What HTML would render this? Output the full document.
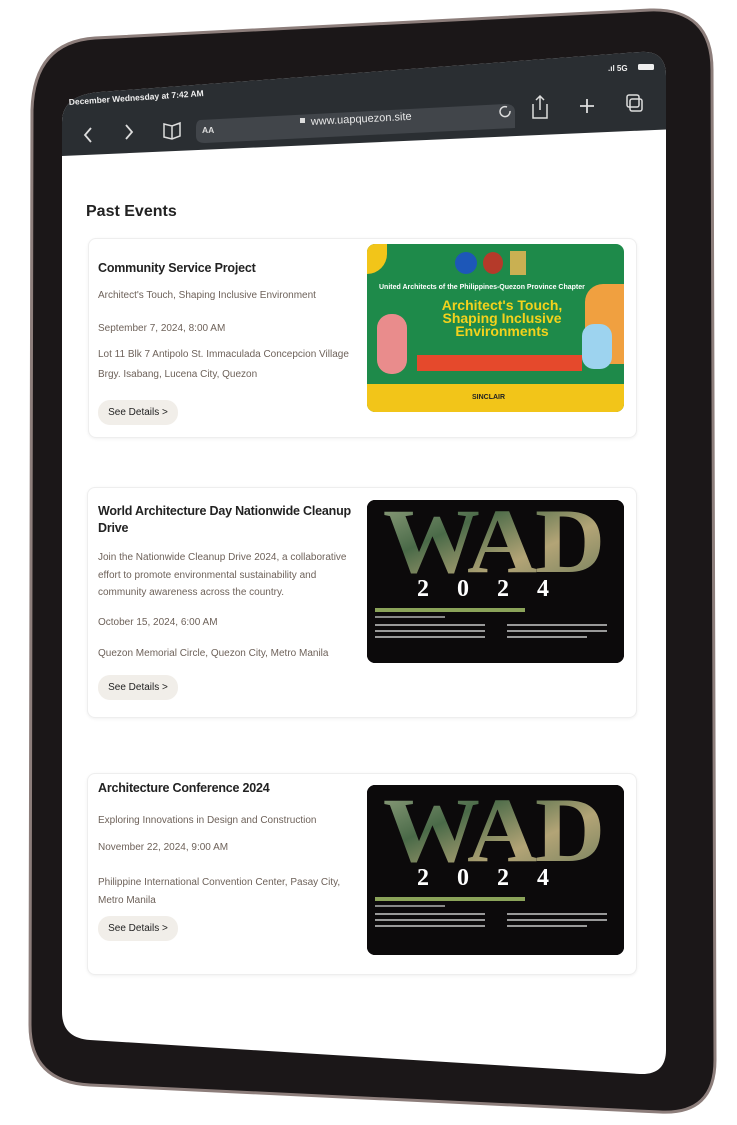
<!DOCTYPE html>
<html><head><meta charset="utf-8"><style>
*{margin:0;padding:0;box-sizing:border-box}
body{width:737px;height:1125px;background:#fff;position:relative;overflow:hidden;font-family:"Liberation Sans",sans-serif}
.a{position:absolute;white-space:nowrap}
.t{font-size:12.5px;font-weight:bold;color:#222;letter-spacing:-0.2px}
.s{font-size:10px;color:#6e625a}
.card{position:absolute;border:1px solid #eee;border-radius:8px;background:#fff;box-shadow:0 1px 3px rgba(0,0,0,.06)}
.btn{position:absolute;background:#f1eee9;border-radius:12px;font-size:10px;color:#222;text-align:center;line-height:25px;width:80px;height:25px}
.wad{position:absolute;background:#0c0a0b;border-radius:8px;overflow:hidden}
</style></head><body>
<svg class="a" style="left:0;top:0" width="737" height="1125">
<defs>
<clipPath id="scr"><path d="M100 92 L640 52 Q666 50 666 76 L666 1050 Q666 1075 640 1074 L90 1040 Q62 1038 62 1012 L62 122 Q62 95 100 92 Z"/></clipPath>
<linearGradient id="wg" x1="0" y1="0" x2="1" y2="1"><stop offset="0" stop-color="#9aa886"/><stop offset=".35" stop-color="#4a6a48"/><stop offset=".65" stop-color="#b3a476"/><stop offset="1" stop-color="#6b7b5a"/></linearGradient>
</defs>
<path d="M95 38 L650 10 Q712 8 712 70 L715 1060 Q715 1115 660 1112 L90 1085 Q30 1082 30 1025 L32 110 Q34 42 95 38 Z" fill="#1b1718" stroke="#8d7e7b" stroke-width="3"/>
<path d="M100 92 L640 52 Q666 50 666 76 L666 1050 Q666 1075 640 1074 L90 1040 Q62 1038 62 1012 L62 122 Q62 95 100 92 Z" fill="#fff"/>
<g clip-path="url(#scr)">
<path d="M40 40 L700 40 L700 128 L40 157 Z" fill="#2a2e32"/>
<path d="M200 120 L505 104 Q515 104 515 112 L515 128 L205 143 Q196 143 196 136 L196 128 Q196 121 200 120 Z" fill="#41454a"/>
</g>
<text x="69" y="105" font-size="8.5" font-weight="bold" fill="#eee" transform="rotate(-3.8 69 105)">December Wednesday at 7:42 AM</text>
<text x="608" y="71" font-size="8" font-weight="bold" fill="#eee">.ıl 5G</text>
<rect x="638" y="64" width="16" height="6" rx="1.5" fill="#eee"/>
<path d="M91 128 L85 135 L91 142" stroke="#ddd" stroke-width="1.8" fill="none"/>
<path d="M126 125 L132 132 L126 139" stroke="#ddd" stroke-width="1.8" fill="none"/>
<path d="M164 124 L172 126 L180 123 L180 136 L172 139 L164 137 Z M172 126 L172 139" stroke="#ddd" stroke-width="1.5" fill="none"/>
<text x="202" y="133" font-size="8.5" font-weight="bold" fill="#ddd">AA</text>
<rect x="300" y="118" width="5" height="5" fill="#ddd"/>
<text x="311" y="125" font-size="11" fill="#e8e8e8" transform="rotate(-3 311 125)">www.uapquezon.site</text>
<path d="M507 107 A5 5 0 1 0 510 111" stroke="#ddd" stroke-width="1.5" fill="none"/>
<path d="M533 104 L533 118 L547 118 L547 104 M540 96 L540 110 M536 100 L540 96 L544 100" stroke="#ddd" stroke-width="1.5" fill="none"/>
<path d="M587 99 L587 113 M580 106 L594 106" stroke="#ddd" stroke-width="1.8"/>
<rect x="630" y="99" width="12" height="12" rx="2" stroke="#ddd" stroke-width="1.5" fill="#2a2e32"/>
<rect x="627" y="95" width="12" height="12" rx="2" stroke="#ddd" stroke-width="1.5" fill="none"/>
</svg>

<div class="a" style="left:86px;top:203px;font-size:16px;font-weight:bold;color:#222">Past Events</div>

<div class="card" style="left:88px;top:238px;width:549px;height:200px"></div>
<div class="a t" style="left:98px;top:261px">Community Service Project</div>
<div class="a s" style="left:98px;top:290px">Architect's Touch, Shaping Inclusive Environment</div>
<div class="a s" style="left:98px;top:323px">September 7, 2024, 8:00 AM</div>
<div class="a s" style="left:98px;top:349px">Lot 11 Blk 7 Antipolo St. Immaculada Concepcion Village</div>
<div class="a s" style="left:98px;top:369px">Brgy. Isabang, Lucena City, Quezon</div>
<div class="btn" style="left:98px;top:400px">See Details &gt;</div>
<div class="a" style="left:367px;top:244px;width:257px;height:168px;border-radius:8px;overflow:hidden;background:#1e8a4a">
  <div class="a" style="left:0;top:140px;width:257px;height:28px;background:#f2c519"></div>
  <div class="a" style="left:0;top:0;width:20px;height:30px;background:#f2c519;border-radius:0 0 20px 0"></div>
  <div class="a" style="left:88px;top:8px;width:22px;height:22px;border-radius:50%;background:#1d57b8"></div>
  <div class="a" style="left:116px;top:8px;width:20px;height:22px;border-radius:50%;background:#b53a2a"></div>
  <div class="a" style="left:143px;top:7px;width:16px;height:24px;background:#c9b052"></div>
  <div class="a" style="left:12px;top:40px;font-size:7px;font-weight:bold;color:#fff">United Architects of the Philippines-Quezon Province Chapter</div>
  <div class="a" style="left:60px;top:55px;font-size:14px;font-weight:bold;color:#f4d21c;line-height:13px;text-align:center;width:150px;white-space:normal">Architect's Touch, Shaping Inclusive Environments</div>
  <div class="a" style="left:50px;top:111px;width:165px;height:16px;background:#e5492c"></div>
  <div class="a" style="left:10px;top:70px;width:30px;height:60px;background:#e98c8c;border-radius:14px"></div>
  <div class="a" style="left:218px;top:40px;width:39px;height:80px;background:#f0a040;border-radius:18px 0 0 18px"></div>
  <div class="a" style="left:215px;top:80px;width:30px;height:45px;background:#9dd3ef;border-radius:12px"></div>
  <div class="a" style="left:105px;top:150px;font-size:7px;font-weight:bold;color:#222">SINCLAIR</div>
</div>

<div class="card" style="left:87px;top:487px;width:550px;height:231px"></div>
<div class="a t" style="left:98px;top:504px">World Architecture Day Nationwide Cleanup</div>
<div class="a t" style="left:98px;top:521px">Drive</div>
<div class="a s" style="left:98px;top:552px">Join the Nationwide Cleanup Drive 2024, a collaborative</div>
<div class="a s" style="left:98px;top:570px">effort to promote environmental sustainability and</div>
<div class="a s" style="left:98px;top:587px">community awareness across the country.</div>
<div class="a s" style="left:98px;top:617px">October 15, 2024, 6:00 AM</div>
<div class="a s" style="left:98px;top:648px">Quezon Memorial Circle, Quezon City, Metro Manila</div>
<div class="btn" style="left:98px;top:675px">See Details &gt;</div>
<svg class="wad" style="left:367px;top:500px" width="257" height="163">
<rect width="257" height="163" fill="#0c0a0b"/>
<text x="126" y="72" text-anchor="middle" font-family="Liberation Serif" font-weight="bold" font-size="92" fill="url(#wg)" letter-spacing="-2" textLength="220" lengthAdjust="spacingAndGlyphs">WAD</text>
<text x="130" y="96" text-anchor="middle" font-family="Liberation Serif" font-weight="bold" font-size="24" fill="#fff" letter-spacing="28">2024</text>
<rect x="8" y="108" width="150" height="4" fill="#8ba35a"/>
<rect x="8" y="116" width="70" height="2" fill="#888"/>
<rect x="8" y="124" width="110" height="2" fill="#999"/><rect x="8" y="130" width="110" height="2" fill="#999"/><rect x="8" y="136" width="110" height="2" fill="#999"/>
<rect x="140" y="124" width="100" height="2" fill="#999"/><rect x="140" y="130" width="100" height="2" fill="#999"/><rect x="140" y="136" width="80" height="2" fill="#999"/>
</svg>

<div class="card" style="left:87px;top:773px;width:550px;height:202px"></div>
<div class="a t" style="left:98px;top:781px">Architecture Conference 2024</div>
<div class="a s" style="left:98px;top:815px">Exploring Innovations in Design and Construction</div>
<div class="a s" style="left:98px;top:842px">November 22, 2024, 9:00 AM</div>
<div class="a s" style="left:98px;top:877px">Philippine International Convention Center, Pasay City,</div>
<div class="a s" style="left:98px;top:895px">Metro Manila</div>
<div class="btn" style="left:98px;top:916px">See Details &gt;</div>
<svg class="wad" style="left:367px;top:785px" width="257" height="170">
<rect width="257" height="170" fill="#0c0a0b"/>
<text x="126" y="76" text-anchor="middle" font-family="Liberation Serif" font-weight="bold" font-size="92" fill="url(#wg)" letter-spacing="-2" textLength="220" lengthAdjust="spacingAndGlyphs">WAD</text>
<text x="130" y="100" text-anchor="middle" font-family="Liberation Serif" font-weight="bold" font-size="24" fill="#fff" letter-spacing="28">2024</text>
<rect x="8" y="112" width="150" height="4" fill="#8ba35a"/>
<rect x="8" y="120" width="70" height="2" fill="#888"/>
<rect x="8" y="128" width="110" height="2" fill="#999"/><rect x="8" y="134" width="110" height="2" fill="#999"/><rect x="8" y="140" width="110" height="2" fill="#999"/>
<rect x="140" y="128" width="100" height="2" fill="#999"/><rect x="140" y="134" width="100" height="2" fill="#999"/><rect x="140" y="140" width="80" height="2" fill="#999"/>
</svg>
</body></html>
